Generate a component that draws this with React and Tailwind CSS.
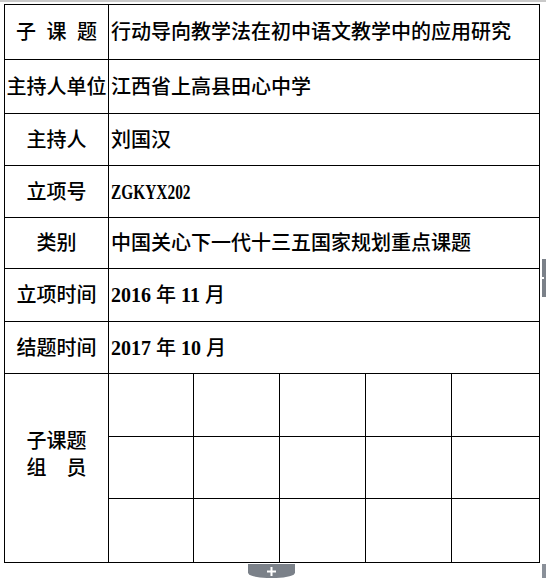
import React from 'react';

const FONT = "font-['Liberation_Serif','Noto_Sans_CJK_SC',serif]";

const N = ({ children }) => <span className="font-bold">{children}</span>;

const ROWS = [
  { label: '子 课 题', value: '行动导向教学法在初中语文教学中的应用研究', h: 'h-[55px]', spaced: true },
  { label: '主持人单位', value: '江西省上高县田心中学', h: 'h-[54px]' },
  { label: '主持人', value: '刘国汉', h: 'h-[52px]' },
  {
    label: '立项号',
    value: <span className="inline-block origin-left scale-x-[0.77] font-bold">ZGKYX202</span>,
    h: 'h-[52px]',
  },
  { label: '类别', value: '中国关心下一代十三五国家规划重点课题', h: 'h-[51px]' },
  { label: '立项时间', value: <><N>2016</N> 年 <N>11</N> 月</>, h: 'h-[53px]' },
  { label: '结题时间', value: <><N>2017</N> 年 <N>10</N> 月</>, h: 'h-[52px]' },
];

const MEMBER_ROWS = ['h-[63px]', 'h-[62px]', 'h-[64px]'];

export default function App() {
  return (
    <div className={`relative w-[546px] h-[578px] overflow-hidden bg-white text-black ${FONT}`}>
      {/* top ruler line */}
      <div className="h-[2px] bg-[#c9c9c9]" />
      <div className="pt-[2px] pl-[4px]">
        <table className="table-fixed border-collapse w-[536px] text-[20px] font-medium leading-none">
          <colgroup>
            <col className="w-[104px]" />
            <col className="w-[85px]" />
            <col className="w-[86px]" />
            <col className="w-[86px]" />
            <col className="w-[86px]" />
            <col />
          </colgroup>
          <tbody>
            {ROWS.map((r) => (
              <tr key={r.label} className={r.h}>
                <td className="border border-black p-0 text-center whitespace-nowrap">
                  <span className={r.spaced ? '[word-spacing:5.5px]' : ''}>{r.label}</span>
                </td>
                <td colSpan={5} className="border border-black p-0 pl-[2px] whitespace-nowrap">
                  {r.value}
                </td>
              </tr>
            ))}
            {MEMBER_ROWS.map((h, i) => (
              <tr key={i} className={h}>
                {i === 0 && (
                  <td rowSpan={3} className="border border-black p-0 pt-[54px] text-center align-top leading-[27px]">
                    <div>子课题</div>
                    <div>组　员</div>
                  </td>
                )}
                {[0, 1, 2, 3, 4].map((c) => (
                  <td key={c} className="border border-black p-0" />
                ))}
              </tr>
            ))}
          </tbody>
        </table>
      </div>

      {/* add-row tab under the table */}
      <div className="absolute left-[248px] top-[564px] w-[47px] h-[14px] bg-[#7b8189] rounded-b-[40%] flex items-center justify-center">
        <svg width="9" height="9" viewBox="0 0 9 9">
          <path d="M3.5 0h2v3.5H9v2H5.5V9h-2V5.5H0v-2h3.5z" fill="#fff" />
        </svg>
      </div>

      {/* right edge scroll handle */}
      <div className="absolute left-[542px] top-[259px] w-[4px] h-[38px] bg-[#7b8189] flex items-center">
        <div className="w-[2px] h-[2px] bg-white" />
      </div>

      {/* resize corner */}
      <div className="absolute left-[542px] top-[564px] w-[4px] h-[14px] bg-[#8a9099]" />
    </div>
  );
}
